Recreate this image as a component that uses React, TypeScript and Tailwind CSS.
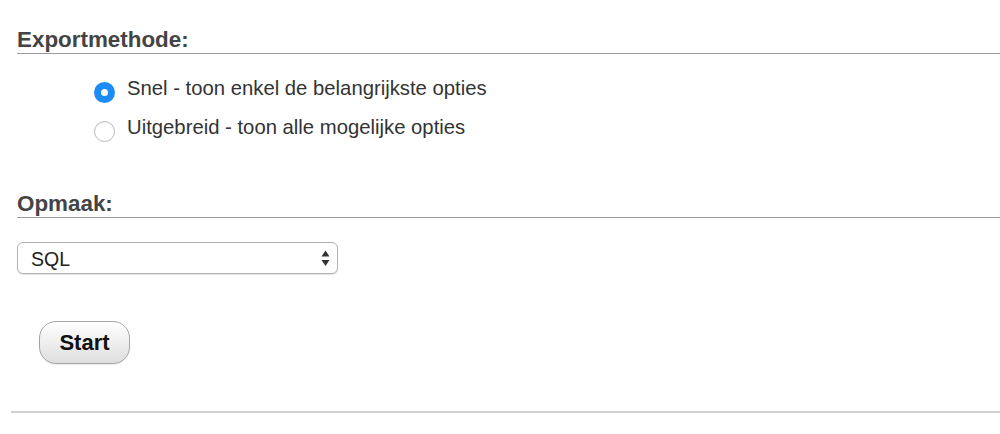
import React from "react";

const OPTIONS = [
  { id: "quick", label: "Snel - toon enkel de belangrijkste opties", checked: true },
  { id: "custom", label: "Uitgebreid - toon alle mogelijke opties", checked: false },
];

function Radio({ checked }: { checked: boolean }) {
  if (checked) {
    return (
      <span className="mt-[8px] flex h-[21px] w-[21px] shrink-0 items-center justify-center rounded-full bg-[#1b8cf6]">
        <span className="h-[7px] w-[7px] rounded-full bg-white" />
      </span>
    );
  }
  return (
    <span className="mt-[8px] h-[21px] w-[21px] shrink-0 rounded-full border border-[#b9b9b9] bg-white shadow-[inset_0_1px_1px_rgba(0,0,0,0.06)]" />
  );
}

export default function App() {
  return (
    <div className="h-[434px] w-full overflow-hidden bg-white pt-[27px] font-['Liberation_Sans',Arial,sans-serif]">
      {/* Export method */}
      <section>
        <h2 className="ml-[17px] border-b border-[#9a9a9a] text-[22.4px] font-bold leading-[26px] text-[#444]">
          Exportmethode:
        </h2>
        <div className="mt-[15px] pl-[94px]">
          {OPTIONS.map((opt) => (
            <label key={opt.id} className="flex h-[39px] items-center gap-[12px]">
              <Radio checked={opt.checked} />
              <span className="text-[20.3px] leading-[39px] text-[#333]">{opt.label}</span>
            </label>
          ))}
        </div>
      </section>

      {/* Format */}
      <section className="mt-[44px]">
        <h2 className="ml-[17px] border-b border-[#9a9a9a] text-[22.4px] font-bold leading-[26px] text-[#444]">
          Opmaak:
        </h2>
        <div className="ml-[17px] mt-[24px] flex h-[32px] w-[321px] items-center justify-between rounded-[6px] border border-[#b3b3b3] bg-white pl-[13px] pr-[7px] pt-[3px] shadow-[0_1px_1px_rgba(0,0,0,0.12)]">
          <span className="text-[19.5px] leading-none text-[#222]">SQL</span>
          <svg width="9" height="17" viewBox="0 0 9 17" className="-mt-[3px]">
            <path d="M4.5 0.5 L8.5 6.5 L0.5 6.5 Z" fill="#333" />
            <path d="M0.5 10 L8.5 10 L4.5 16 Z" fill="#333" />
          </svg>
        </div>
        <button className="ml-[39px] mt-[47px] flex h-[43px] w-[91px] items-center justify-center rounded-[17px] border border-[#a6a6a6] bg-gradient-to-b from-white to-[#dedede] text-[22px] font-bold text-[#111] shadow-[0_1px_1px_rgba(0,0,0,0.08)]">
          Start
        </button>
      </section>

      <div className="ml-[11px] mt-[47px] border-t-2 border-[#d0d0d0]" />
    </div>
  );
}
